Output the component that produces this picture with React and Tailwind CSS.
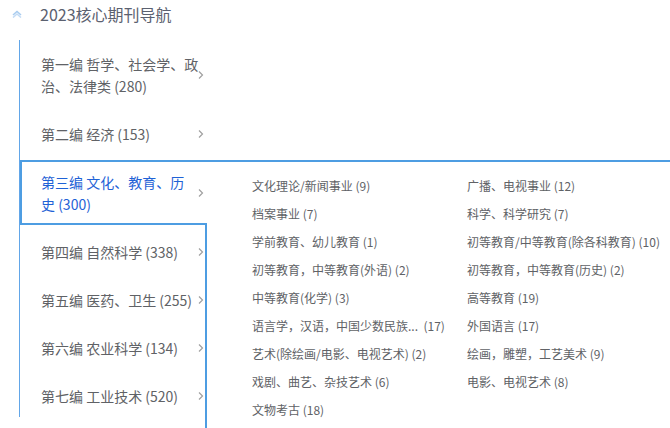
import React from 'react';

const groups = [
  { lines: ['第一编 哲学、社会学、政', '治、法律类 (280)'] },
  { lines: ['第二编 经济 (153)'] },
  { lines: ['第三编 文化、教育、历', '史 (300)'], active: true },
  { lines: ['第四编 自然科学 (338)'] },
  { lines: ['第五编 医药、卫生 (255)'] },
  { lines: ['第六编 农业科学 (134)'] },
  { lines: ['第七编 工业技术 (520)'] },
];

const subjects = [
  ['文化理论/新闻事业', 9],
  ['广播、电视事业', 12],
  ['档案事业', 7],
  ['科学、科学研究', 7],
  ['学前教育、幼儿教育', 1],
  ['初等教育/中等教育(除各科教育)', 10],
  ['初等教育，中等教育(外语)', 2],
  ['初等教育，中等教育(历史)', 2],
  ['中等教育(化学)', 3],
  ['高等教育', 19],
  ['语言学，汉语，中国少数民族...', 17, true],
  ['外国语言', 17],
  ['艺术(除绘画/电影、电视艺术)', 2],
  ['绘画，雕塑，工艺美术', 9],
  ['戏剧、曲艺、杂技艺术', 6],
  ['电影、电视艺术', 8],
  ['文物考古', 18],
];

const Chevron = () => (
  <svg width="6" height="10" viewBox="0 0 6 10" className="absolute right-[3px] top-1/2 -translate-y-1/2">
    <path d="M1 1.5 L4.5 5 L1 8.5" fill="none" stroke="#a0a0a0" strokeWidth="1.2" />
  </svg>
);

const App = () => {
  return (
    <div
      className="w-[670px] h-[428px] overflow-hidden bg-white text-[#606266]"
      style={{ fontFamily: '"Noto Sans CJK SC", "Noto Sans", sans-serif' }}
    >
      {/* Header */}
      <div className="flex items-center h-[28px] pl-[12px]">
        <svg width="10" height="8" viewBox="0 0 10 8" className="shrink-0">
          <path d="M1 5 L5 1.5 L9 5" fill="none" stroke="#a9ccef" strokeWidth="1.6" />
          <path d="M1 7.5 L5 4 L9 7.5" fill="none" stroke="#c4dcf5" strokeWidth="1.6" />
        </svg>
        <span className="ml-[18px] text-[16px] leading-[20px] text-[#5b6170]">2023核心期刊导航</span>
      </div>

      <div className="flex mt-[12px] ml-[19px]">
        {/* Left menu */}
        <div className="w-[188px] shrink-0 border-l border-[#62a6e8] h-[377px]">
          {groups.map((g) => (
            <div
              key={g.lines[0]}
              className={
                g.active
                  ? 'relative z-10 bg-white mt-[2px] mb-[3px] h-[65px] border-y-2 border-l-2 border-[#4d9de2] pl-[19px] pt-[9px] text-[#1f62d6]'
                  : 'relative pl-[21px] py-[13px]'
              }
            >
              <div className="text-[14px] leading-[22px] whitespace-nowrap">
                {g.lines.map((l) => (
                  <div key={l}>{l}</div>
                ))}
              </div>
              <Chevron />
            </div>
          ))}
        </div>

        {/* Flyout panel */}
        <div className="mt-[120px] -ml-[2px] flex-1 h-[300px] border-2 border-r-0 border-b-0 border-[#4d9de2] pl-[45px] pt-[10px]">
          <div className="grid grid-cols-[215px_1fr] text-[12px] leading-[28px]">
            {subjects.map(([name, count, gap]) => (
              <div key={name} className="whitespace-nowrap">
                {name}
                {gap ? '\u00a0\u00a0' : ' '}({count})
              </div>
            ))}
          </div>
        </div>
      </div>
    </div>
  );
};

export default App;
